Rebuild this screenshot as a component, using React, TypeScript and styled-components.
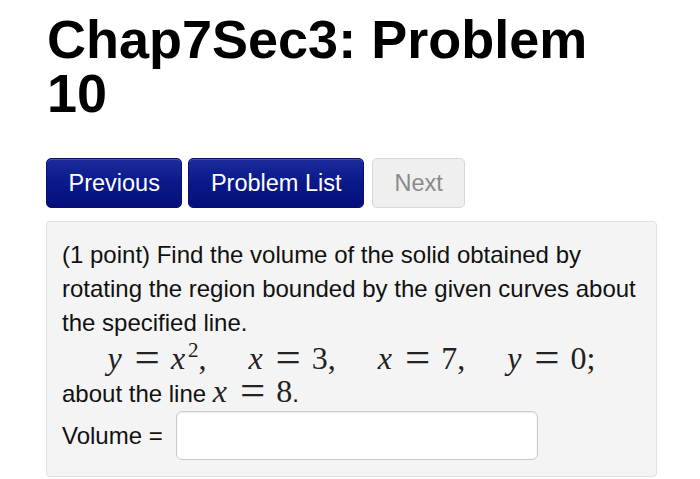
import React from "react";
import styled, { createGlobalStyle } from "styled-components";

const GlobalStyle = createGlobalStyle`
  html, body {
    margin: 0;
    padding: 0;
    background: #ffffff;
  }
  body {
    font-family: "Liberation Sans", Arial, Helvetica, sans-serif;
    color: #111111;
  }
`;

const Page = styled.div`
  padding: 0 43px 0 46px;
`;

const Title = styled.h1`
  margin: 12px 0 0 1px;
  font-size: 54px;
  line-height: 54px;
  font-weight: 700;
  color: #000;
`;

const Nav = styled.div`
  display: flex;
  gap: 6px;
  margin-top: 38px;
`;

const NavButton = styled.button<{ $disabled?: boolean }>`
  box-sizing: border-box;
  height: 50px;
  padding: 0 21.5px;
  margin-left: ${(p) => (p.$disabled ? "2px" : "0")};
  display: flex;
  align-items: center;
  font-family: "Liberation Sans", Arial, Helvetica, sans-serif;
  font-size: 23.5px;
  border-radius: 5px;
  cursor: ${(p) => (p.$disabled ? "default" : "pointer")};
  color: ${(p) => (p.$disabled ? "#8a8a8a" : "#ffffff")};
  border: 1px solid ${(p) => (p.$disabled ? "#d8d8d8" : "#07106a")};
  background: ${(p) =>
    p.$disabled
      ? "#efefef"
      : "linear-gradient(to bottom, #1d2c9c 0%, #0b1a8a 45%, #040f7c 100%)"};
  box-shadow: ${(p) =>
    p.$disabled ? "none" : "inset 0 1px 0 rgba(255,255,255,0.18)"};
`;

const Panel = styled.div`
  margin-top: 13px;
  box-sizing: border-box;
  background: #f4f4f4;
  border: 1px solid #e2e2e2;
  border-radius: 4px;
  padding: 16px 15px 16px 15px;
  font-size: 24px;
  line-height: 34px;
  color: #111;
`;

const Para = styled.div``;

const MathDisplay = styled.div`
  font-family: "Liberation Serif", "Times New Roman", serif;
  font-size: 32px;
  line-height: 37px;
  height: 37px;
  text-align: center;
  color: #222;
  white-space: nowrap;
`;

const MathInline = styled.span`
  font-family: "Liberation Serif", "Times New Roman", serif;
  font-size: 32px;
  line-height: 0;
  color: #222;
  white-space: nowrap;
`;

const Var = styled.i`
  font-style: italic;
  margin-right: 0.06em;
`;

const Op = styled.span`
  display: inline-block;
  font-size: 1.4em;
  line-height: 0;
  margin: 0 11px;
  vertical-align: -0.06em;
`;

const Sup = styled.sup`
  font-size: 21px;
  line-height: 0;
  vertical-align: 12px;
  margin-left: 1px;
`;

const Quad = styled.span`
  display: inline-block;
  width: 42px;
`;

const AnswerRow = styled.div`
  display: flex;
  align-items: center;
  gap: 13px;
`;

const Label = styled.span`
  white-space: nowrap;
`;

const AnswerInput = styled.input`
  box-sizing: border-box;
  width: 362px;
  height: 49px;
  background: #ffffff;
  border: 1px solid #cacaca;
  border-radius: 6px;
  box-shadow: inset 0 1px 2px rgba(0, 0, 0, 0.08);
  font-size: 22px;
  padding: 0 10px;
  outline: none;
`;

export default function App() {
  return (
    <>
      <GlobalStyle />
      <Page>
        <Title>Chap7Sec3: Problem 10</Title>
        <Nav>
          <NavButton>Previous</NavButton>
          <NavButton>Problem List</NavButton>
          <NavButton $disabled>Next</NavButton>
        </Nav>
        <Panel>
          <Para>
            (1 point) Find the volume of the solid obtained by rotating the
            region bounded by the given curves about the specified line.
          </Para>
          <MathDisplay>
            <Var>y</Var>
            <Op>=</Op>
            <Var>x</Var>
            <Sup>2</Sup>,<Quad />
            <Var>x</Var>
            <Op>=</Op>3,<Quad />
            <Var>x</Var>
            <Op>=</Op>7,<Quad />
            <Var>y</Var>
            <Op>=</Op>0;
          </MathDisplay>
          <Para>
            about the line{" "}
            <MathInline>
              <Var>x</Var>
              <Op>=</Op>8
            </MathInline>
            .
          </Para>
          <AnswerRow>
            <Label>Volume =</Label>
            <AnswerInput type="text" aria-label="Volume" />
          </AnswerRow>
        </Panel>
      </Page>
    </>
  );
}
